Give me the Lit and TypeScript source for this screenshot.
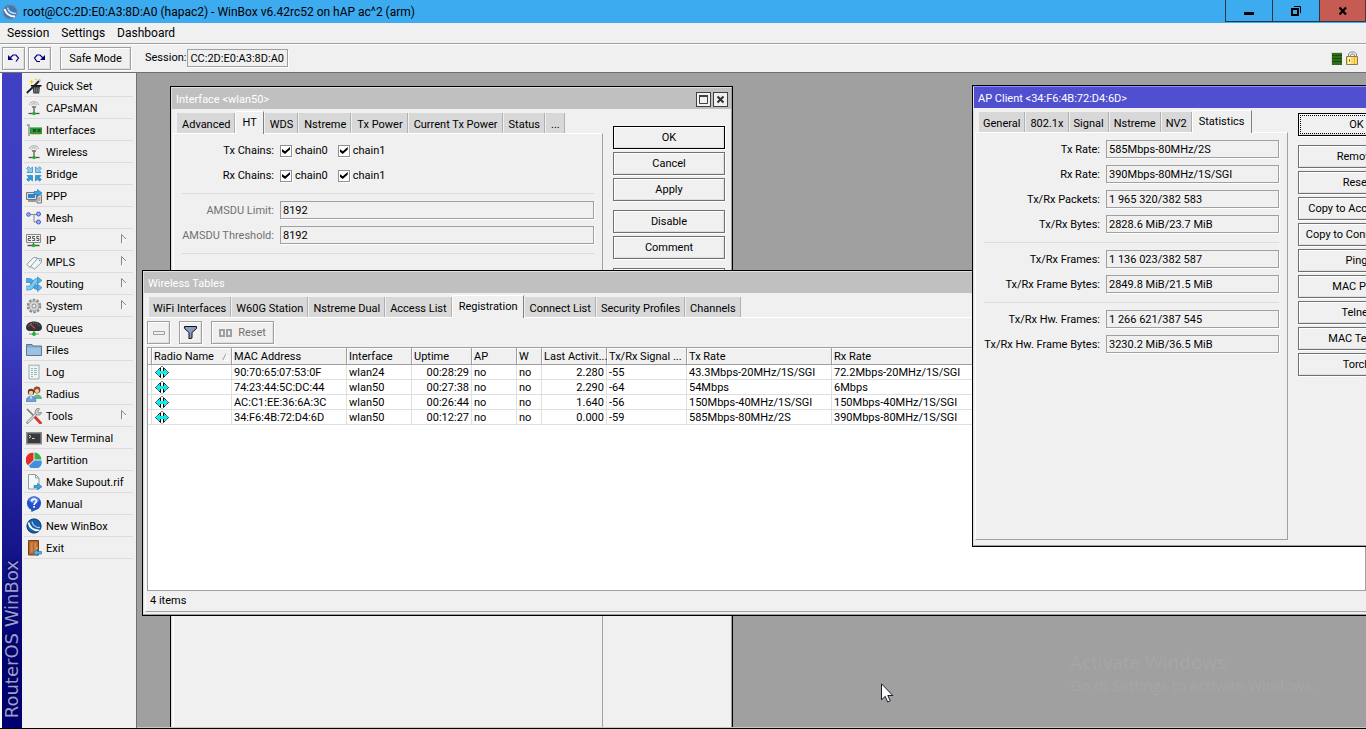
import { LitElement, html, svg, css, nothing } from "lit";
import { customElement, property } from "lit/decorators.js";
import { classMap } from "lit/directives/class-map.js";

const controls = css`
  * { box-sizing: border-box; }
  button, input, label, a { font: inherit; color: inherit; }
  button { cursor: default; white-space: nowrap; }
  .btn {
    height: 23px;
    padding: 0 8px;
    border: 1px solid #a0a0a0;
    background: #f0f0f0;
    box-shadow: inset 1px 1px #fff, inset -1px -1px #dfdfdf, 1px 1px #fff;
    display: flex;
    align-items: center;
    justify-content: center;
  }
  .btn.dark { border-color: #707070; }
  .btn.default { border-color: #000; }
  .btn.square { width: 23px; padding: 0; }
  .btn:disabled { color: #707070; }
  .field {
    height: 18px;
    min-width: 0;
    padding: 0 2px;
    border: 1px solid #a0a0a0;
    border-radius: 0;
    background: #f0f0f0;
    box-shadow: 1px 1px #fff;
    outline: none;
  }
`;

const icons: Record<string, unknown> = {
  quick: svg`<path d="M6.500 8h7.500l-.8 7.500H7.300z" fill="#3a3a3a"/><path d="M8.500 9.500v5M10.300 9.500v5M12.100 9.500v5" stroke="#909090" stroke-width=".8"/><path d="M5 7.800h10.500" stroke="#111" stroke-width="1.600"/><path d="M.8 15L7 9" stroke="#222" stroke-width="1.800"/><path d="M8 8l6-6" stroke="#222" stroke-width="1.800"/><path d="M12.800 3.200l1.700-1.700" stroke="#ccc" stroke-width="1.800"/><path d="M5.500 1l.7 2 2 .7-2 .7-.7 2-.7-2-2-.7 2-.7zM10 0l.4 1.100 1.100.4-1.100.4L10 3l-.4-1.100-1.100-.4 1.100-.4z" fill="#f2d01c"/>`,
  antenna: svg`<path d="M3.500 5c0-4.300 9-4.300 9 0M5.500 5.500c0-2.300 5-2.300 5 0" fill="none" stroke="#a4a4a4" stroke-width="1"/><path d="M6 7h4M8 6v7" stroke="#777" stroke-width="1.600"/><path d="M2.500 13.500h11" stroke="#555" stroke-width="1.300"/><circle cx="8" cy="13.500" r="1.700" fill="#19b52b"/>`,
  card: svg`<path d="M.8 3H3v11" fill="none" stroke="#999" stroke-width="1.600"/><path d="M4 5h12v7H4z" fill="#2f9a35"/><path d="M4 5h12v1H4z" fill="#70c875"/><path d="M7 7h3v3H7zM11.500 7h3v3h-3z" fill="#22502a"/><path d="M5.500 12.500h9" stroke="#d9bd3c" stroke-dasharray="1 .6"/>`,
  bridge: svg`<g fill="#8ed0f4" stroke="#2b7fb8" stroke-width=".7"><path d="M.7 2.500L2.500.7l2 2L6.500 1v5.500H1L2.700 4.500zM15.300 2.500L13.500.7l-2 2L9.500 1v5.500H15l-1.700-2z"/><path d="M.7 13.500l1.800 1.800 2-2L6.500 15V9.500H1l1.700 2zM15.300 13.500l-1.800 1.800-2-2L9.500 15V9.500H15l-1.700 2z" fill="#2f9be0"/></g>`,
  ppp: svg`<path d="M.5 4.500h10v7H.5z" fill="#ddd" stroke="#777"/><path d="M2 6h7v4H2z" fill="#2c83cf"/><path d="M2 12h8v2H2z" fill="#999"/><path d="M11 7h4.500v8H11z" fill="#e6e6e6" stroke="#777"/><path d="M12 10h2.500M12 12h2.500" stroke="#777"/><path d="M8 3.500h3.500v-2L16 5l-4.500 3.500v-2H8z" fill="#37a5e8" stroke="#1a6ba8" stroke-width=".6"/>`,
  mesh: svg`<path d="M4 4.500h6M8 4.500V12h3" fill="none" stroke="#888"/><g fill="#9cb0f5" stroke="#4059c8"><circle cx="2.500" cy="4.500" r="1.800"/><circle cx="12.500" cy="4" r="2"/><circle cx="12.500" cy="12" r="2"/></g>`,
  ip: svg`<path d="M.5 2.500h14v8H.5z" fill="#f2f2f2" stroke="#888"/><path d="M2 4.500h2.500v2H2.300v2H5M6.300 8.500h2.400v-2H6.600v-2H9M10.500 8.500h2.400v-2h-2.100v-2h2.400" fill="none" stroke="#444" stroke-width=".9"/><path d="M1.500 13.500h12M7.500 11v2" stroke="#555" stroke-width="1.300"/><circle cx="7.500" cy="13.500" r="1.800" fill="#19b52b"/>`,
  mpls: svg`<g fill="#f3f7f8" stroke="#7d9298" stroke-width=".9"><path d="M.8 10.500L7.500 3.500l3.500.2L11.200 7l-7 6.500z"/><path d="M4.500 12.500l7-8 4 .3-.3 3.900L8.500 15z"/></g><circle cx="13.500" cy="6.500" r=".8" fill="#7d9298"/>`,
  routing: svg`<path d="M0 4.500h3.500c3 0 4.500 7 7.500 7h2" fill="none" stroke="#2b7fb8" stroke-width="4.400"/><path d="M0 4.500h3.500c3 0 4.500 7 7.500 7h2" fill="none" stroke="#4aa8e6" stroke-width="3.400"/><path d="M0 12h3.500c3 0 4.500-7.500 7.500-7.500h2" fill="none" stroke="#2b7fb8" stroke-width="4.400"/><path d="M0 12h3.500c3 0 4.500-7.500 7.500-7.500h2" fill="none" stroke="#7cc8f4" stroke-width="3.400"/><path d="M11.500.8L16 4.500 11.500 8zM11.500 8L16 11.700 11.500 15.500z" fill="#56b1ea" stroke="#2b7fb8" stroke-width=".6"/>`,
  gear: svg`<circle cx="8" cy="8" r="6.300" fill="none" stroke="#8a8a8a" stroke-width="2" stroke-dasharray="2.500 1.450"/><circle cx="8" cy="8" r="5" fill="#d6d6d6" stroke="#8a8a8a" stroke-width=".8"/><circle cx="8" cy="8" r="2" fill="#f0f0f0" stroke="#8a8a8a"/>`,
  gauge: svg`<path d="M0 7.500C0 -.5 16 -.5 16 7.500c0 2-1 3-3 3.500H3C1 10.500 0 9.500 0 7.500z" fill="#303438"/><path d="M2.500 6.500c1-4.500 10-4.500 11 0" fill="none" stroke="#999" stroke-width=".8" stroke-dasharray="1 1"/><path d="M4 4l5 4.500" stroke="#e23a2c" stroke-width="1.400"/><path d="M3 14h10" stroke="#888"/><path d="M8 11v3" stroke="#555"/><circle cx="8" cy="14" r="1.900" fill="#19b52b"/>`,
  folder: svg`<path d="M.5 2.500h5.500l1 1.500h8.500v9.500H.5z" fill="#84a9cc" stroke="#4f789f"/><path d="M1 5.500h14v7.500H1z" fill="#9fc0de"/>`,
  log: svg`<path d="M3 .8l1 .8 1-.8 1 .8 1-.8 1 .8 1-.8 1 .8 1-.8 1 .8 1-.8V15H3z" fill="#edf5f5" stroke="#88a09f" stroke-width=".8"/><path d="M5 4.500h2M8 4.500h3M5 6.500h2M8 6.500h3M5 8.500h2M8 8.500h3M5 10.500h2M8 10.500h3M5 12.500h2" stroke="#8db3b1" stroke-width=".9"/>`,
  radius: svg`<circle cx="11" cy="4" r="3.400" fill="#9b4a28"/><circle cx="11" cy="5" r="2" fill="#f3c9a0"/><path d="M7 13c0-6 9-6 9 0z" fill="#63b889"/><circle cx="5" cy="6" r="3.200" fill="#5a3a20"/><circle cx="5" cy="7" r="2.200" fill="#f3c9a0"/><path d="M0 15.500c0-7 10-7 10 0z" fill="#6aa2e0" stroke="#3d6fb0" stroke-width=".6"/><path d="M4 10.500l1 3 1-3z" fill="#fff"/>`,
  tools: svg`<path d="M1 1l7.500 7.500" stroke="#777" stroke-width="1.600"/><path d="M8.500 8.500L14.500 15" stroke="#d9352b" stroke-width="2.800" stroke-linecap="round"/><path d="M1.500 14.500L11 5" stroke="#8a8a8a" stroke-width="2.600" stroke-linecap="round"/><path d="M1.500 14.500L11 5" stroke="#ddd" stroke-width="1.200"/><path d="M13.500.8a3.200 3.200 0 1 0 2 3.700L13 4.800 11.800 3.300z" fill="#ccc" stroke="#777" stroke-width=".8"/>`,
  terminal: svg`<path d="M0 2h16v12.500H0z" fill="#8c8c8c"/><path d="M1.500 3.500h13v9.500h-13z" fill="#3a3a3e"/><path d="M3 5l2 1.500L3 8M6 8.500h2.500" fill="none" stroke="#eee" stroke-width=".9"/>`,
  pie: svg`<path d="M7.500 8.200V.8A7.200 7.200 0 0 0 2 13.300z" fill="#e02f2a"/><path d="M8.500 7.500V.6A7 7 0 0 1 15.400 7.500z" fill="#35b046"/><path d="M8.500 8.500h7A7 7 0 0 1 2.800 13.800z" fill="#3d8fe0"/>`,
  supout: svg`<path d="M2.500.5h7l3.500 3.500v11h-10.500z" fill="#f4f8f8" stroke="#8aa1a1"/><path d="M9.500.5V4H13" fill="none" stroke="#8aa1a1"/><path d="M8 11.500h3.500v-2L16 12.700l-4.500 3v-2H8z" fill="#37a5e8" stroke="#1a6ba8" stroke-width=".6"/>`,
  manual: svg`<circle cx="8" cy="7.300" r="7" fill="#2450cc"/><path d="M5 13l.5 3 4-2z" fill="#2450cc"/><ellipse cx="8" cy="4" rx="5" ry="3" fill="#5f88ec"/><path d="M5.700 5.500c0-3 4.800-3 4.800-.3 0 1.800-2.400 1.700-2.400 3.700M8.100 10v1.800" fill="none" stroke="#fff" stroke-width="1.700"/>`,
  winbox: svg`<circle cx="8" cy="8" r="7.500" fill="#1b5fa6"/><circle cx="8" cy="8" r="7" fill="none" stroke="#0f4178" stroke-width=".8"/><path d="M2.500 4.500c1 5 5 8 11 8" fill="none" stroke="#fff" stroke-width="1.700"/><path d="M6 3.500c.6 3.600 3.500 6 8 6.200" fill="none" stroke="#a9d0f2" stroke-width="1.300"/>`,
  exit: svg`<path d="M2.500.5h10v14.500h-10z" fill="#b5672d" stroke="#7a3f14"/><path d="M4.500 2.500h2.200v10H4.500zM8.300 2.500h2.200v10H8.300z" fill="#cf8850"/><circle cx="11" cy="8" r=".8" fill="#f0d060"/><path d="M15.500 11.500h-4V9.800L7 12.800l4.500 3V14h4z" fill="#4db4ee" stroke="#1a6ba8" stroke-width=".6"/>`,
};

const drawIcon = (name: string) =>
  html`<svg class="icon" viewBox="0 0 16 16" width="16" height="16" aria-hidden="true">${icons[name]}</svg>`;

@customElement("wb-window")
export class WbWindow extends LitElement {
  @property() heading = "";
  @property({ type: Array }) tabs: string[] = [];
  @property() current = "";
  @property({ type: Boolean, reflect: true }) active = false;
  @property({ type: Boolean }) boxes = false;

  static styles = [
    controls,
    css`
      :host {
        display: flex;
        flex-direction: column;
        position: absolute;
        border: 1px solid #000;
        background: #f0f0f0;
        box-sizing: border-box;
      }
      .frame {
        flex: 1;
        display: flex;
        flex-direction: column;
        border: 1px solid;
        border-color: #dfdfdf #a0a0a0 #a0a0a0 #dfdfdf;
      }
      .title {
        height: 21px;
        display: flex;
        align-items: center;
        gap: 2px;
        padding: 2px 3px 0 4px;
        background: #c0c0c0;
        color: #fff;
      }
      :host([active]) .title { background: #4f4fcf; }
      :host([active]) .frame { border-top-color: #8c8cff; }
      .heading { flex: 1; padding-top: 1px; }
      .box {
        width: 15px;
        height: 15px;
        padding: 0;
        display: flex;
        align-items: center;
        justify-content: center;
        border: 1px solid #404040;
        background: #f0f0f0;
      }
      .body {
        flex: 1;
        display: flex;
        padding: 0 1px var(--foot, 2px) 1px;
      }
      .main {
        flex: 1;
        min-width: 0;
        display: flex;
        flex-direction: column;
      }
      .tabs {
        height: 24px;
        display: flex;
        align-items: flex-end;
        padding-left: 3px;
      }
      .tab {
        height: 20px;
        padding: 3px 4px 0 var(--tab-start, 4px);
        border: 0;
        border-right: 1px solid #b0b0b0;
        border-left: 1px solid #f0f0f0;
        background: #d8d8d8;
      }
      .tab.current {
        height: 23px;
        margin-bottom: -1px;
        padding: 0 6px 1px 6px;
        border-top: 1px solid #fff;
        border-left: 1px solid #fff;
        border-right: 1px solid #808080;
        background: #f0f0f0;
        position: relative;
      }
      .panel {
        flex: 1;
        display: flex;
        flex-direction: column;
        border: 1px solid;
        border-color: #fff #a0a0a0 #a0a0a0 #fff;
      }
    `,
  ];

  render() {
    return html`
      <div class="frame">
        <div class="title">
          <span class="heading">${this.heading}</span>
          ${this.boxes
            ? html`
                <button class="box" aria-label="Maximize">
                  <svg width="11" height="11"><path d="M1.500 1.500h8v8h-8z" fill="none" stroke="#404040"/><path d="M1 2h9" stroke="#404040" stroke-width="2"/></svg>
                </button>
                <button class="box" aria-label="Close">
                  <svg width="11" height="11"><path d="M2.500 2.500l6 6M8.500 2.500l-6 6" stroke="#303030" stroke-width="2"/></svg>
                </button>`
            : nothing}
        </div>
        <div class="body">
          <div class="main">
            <div class="tabs" role="tablist">
              ${this.tabs.map(
                (t) => html`<button role="tab" aria-selected=${t === this.current}
                  class=${classMap({ tab: true, current: t === this.current })}>${t}</button>`
              )}
            </div>
            <div class="panel" role="tabpanel"><slot></slot></div>
          </div>
          <slot name="actions"></slot>
        </div>
      </div>
    `;
  }
}

type Item = [icon: string, label: string, sub?: boolean];
const menu: Item[] = [
  ["quick", "Quick Set"], ["antenna", "CAPsMAN"], ["card", "Interfaces"], ["antenna", "Wireless"],
  ["bridge", "Bridge"], ["ppp", "PPP"], ["mesh", "Mesh"], ["ip", "IP", true], ["mpls", "MPLS", true],
  ["routing", "Routing", true], ["gear", "System", true], ["gauge", "Queues"], ["folder", "Files"],
  ["log", "Log"], ["radius", "Radius"], ["tools", "Tools", true], ["terminal", "New Terminal"],
  ["pie", "Partition"], ["supout", "Make Supout.rif"], ["manual", "Manual"], ["winbox", "New WinBox"],
  ["exit", "Exit"],
];

const columns: [label: string, width: number | null, right?: boolean][] = [
  ["", 4], ["Radio Name", 80], ["MAC Address", 115], ["Interface", 65], ["Uptime", 60, true], ["AP", 45],
  ["W", 25], ["Last Activit...", 65, true], ["Tx/Rx Signal ...", 80], ["Tx Rate", 145], ["Rx Rate", null],
];

const clients = [
  ["90:70:65:07:53:0F", "wlan24", "00:28:29", "no", "no", "2.280", "-55", "43.3Mbps-20MHz/1S/SGI", "72.2Mbps-20MHz/1S/SGI"],
  ["74:23:44:5C:DC:44", "wlan50", "00:27:38", "no", "no", "2.290", "-64", "54Mbps", "6Mbps"],
  ["AC:C1:EE:36:6A:3C", "wlan50", "00:26:44", "no", "no", "1.640", "-56", "150Mbps-40MHz/1S/SGI", "150Mbps-40MHz/1S/SGI"],
  ["34:F6:4B:72:D4:6D", "wlan50", "00:12:27", "no", "no", "0.000", "-59", "585Mbps-80MHz/2S", "390Mbps-80MHz/1S/SGI"],
];

const statistics: [string, string][][] = [
  [["Tx Rate", "585Mbps-80MHz/2S"], ["Rx Rate", "390Mbps-80MHz/1S/SGI"],
   ["Tx/Rx Packets", "1 965 320/382 583"], ["Tx/Rx Bytes", "2828.6 MiB/23.7 MiB"]],
  [["Tx/Rx Frames", "1 136 023/382 587"], ["Tx/Rx Frame Bytes", "2849.8 MiB/21.5 MiB"]],
  [["Tx/Rx Hw. Frames", "1 266 621/387 545"], ["Tx/Rx Hw. Frame Bytes", "3230.2 MiB/36.5 MiB"]],
];

@customElement("app-root")
export class AppRoot extends LitElement {
  static styles = [
    controls,
    css`
      :host {
        display: flex;
        flex-direction: column;
        height: 100vh;
        overflow: hidden;
        box-sizing: border-box;
        border-bottom: 1px solid #000;
        background: #f0f0f0;
        color: #000;
        font: 11px/14px Roboto, "Liberation Sans", sans-serif;
      }
      svg { display: block; flex: none; }

      .titlebar {
        height: 23px;
        flex: none;
        display: flex;
        align-items: center;
        gap: 5px;
        padding-left: 2px;
        background: #3dabf0;
        font: 12px/16px Roboto, "Open Sans", sans-serif;
      }
      .titlebar h1 { flex: 1; margin: 0; padding-top: 1px; font: inherit; }
      .caption { display: flex; align-self: flex-start; }
      .caption button {
        width: 47px;
        height: 22px;
        padding: 0;
        border: 1px solid #24384a;
        border-top: 0;
        border-right: 0;
        background: transparent;
        display: flex;
        align-items: center;
        justify-content: center;
      }
      .caption .close { background: #c55b52; border-right: 1px solid #5a3038; }

      .menubar {
        height: 21px;
        flex: none;
        display: flex;
        align-items: center;
        gap: 12px;
        padding: 0 7px;
        border-bottom: 1px solid #a0a0a0;
        font: 12px/16px Roboto, "Open Sans", sans-serif;
      }
      .menubar button { padding: 0; border: 0; background: none; }

      .toolbar {
        height: 29px;
        flex: none;
        display: flex;
        align-items: center;
        gap: 3px;
        padding: 0 7px 1px 2px;
        border-top: 1px solid #fff;
        border-bottom: 1px solid #707070;
      }
      .toolbar .safe { width: 71px; margin: 0 11px 0 6px; padding-top: 1px; }
      .toolbar .session { width: 101px; margin-left: -2px; }
      .toolbar .led { margin-left: auto; }
      .toolbar .lock { margin-left: 1px; }

      .workspace { flex: 1; min-height: 0; display: flex; }
      .brand {
        width: 22px;
        border-left: 2px solid #fff;
        background: linear-gradient(#4040c4, #3c3cc0 40%, #000070 90%);
        writing-mode: vertical-rl;
        display: flex;
        align-items: center;
        justify-content: flex-end;
      }
      .brand span {
        transform: rotate(180deg);
        padding-top: 10px;
        font: 18px/20px "DejaVu Sans", sans-serif;
        color: #9c9cd0;
        text-shadow: 1px -1px 2px #00003c;
      }
      .menu {
        width: 115px;
        flex: none;
        padding: 2px 3px 0 2px;
        border-right: 1px solid #707070;
      }
      .menu a {
        height: 22px;
        display: flex;
        align-items: center;
        gap: 4px;
        padding: 0 5px 0 2px;
        border-bottom: 1px solid #dcdcdc;
        text-decoration: none;
      }
      .menu a span { flex: 1; padding-top: 2px; white-space: nowrap; }

      .desktop {
        flex: 1;
        min-width: 0;
        position: relative;
        overflow: hidden;
        background: #a0a0a0;
        border-bottom: 1px solid #c8c8c8;
      }
      .interface { left: 33px; top: 13px; width: 563px; height: 700px; --foot: 5px; --tab-start: 5px; }
      .wireless { left: 5px; top: 197px; right: -5px; height: 346px; }
      .client { left: 835px; top: 12px; width: 452px; height: 462px; --foot: 5px; }

      .form { display: flex; flex-direction: column; gap: 7px; padding: 7px 8px; }
      .row { display: grid; align-items: center; height: 18px; gap: 6px; }
      .row > .name { padding-top: 2px; text-align: right; white-space: nowrap; }
      .form.narrow .row { grid-template-columns: 92px 1fr; }
      .form.wide .row { grid-template-columns: 116px 1fr; }
      .row.off .name { color: #707070; }
      .rule { height: 1px; margin: 2px 0 0; border: 0; background: #dcdcdc; }
      .choices { display: flex; gap: 10px; }
      .choices label { display: flex; align-items: center; gap: 3px; padding-top: 1px; }
      .choices input {
        appearance: none;
        width: 12px;
        height: 12px;
        margin: 0;
        border: 1px solid #909090;
        background: #fff;
        box-shadow: 1px 1px #fff;
        display: grid;
        place-items: center;
      }
      .choices input:checked::before {
        content: "";
        width: 8px;
        height: 7px;
        background: #000;
        clip-path: polygon(0 30%, 38% 62%, 100% 0, 100% 36%, 38% 100%, 0 68%);
      }

      .actions { display: flex; flex-direction: column; gap: 3px; }
      .interface .actions { width: 127px; padding: 17px 5px 0 10px; }
      .client .actions { width: 133px; padding: 5px 6px 0 10px; }
      .actions .btn { flex: none; padding-top: 1px; }
      .actions .group { margin-top: 6px; }
      .focus { outline: 1px dotted #000; outline-offset: -3px; }

      .tools { display: flex; gap: 9px; padding: 3px 1px; }
      .tools .reset { width: 63px; gap: 6px; padding: 1px 2px 0; }
      .grid {
        flex: 1;
        margin: 0 1px;
        border: 1px solid #a0a0a0;
        background: #fff;
      }
      table { width: 100%; border-collapse: separate; border-spacing: 0; table-layout: fixed; }
      th, td {
        height: 15px;
        padding: 1px 2px 0 2px;
        border-right: 1px solid #dfdfdf;
        border-bottom: 1px solid #dfdfdf;
        font-weight: 400;
        line-height: 13px;
        text-align: left;
        white-space: nowrap;
      }
      th {
        height: 17px;
        padding-right: 0;
        background: #f0f0f0;
        border-color: #a0a0a0;
        box-shadow: inset 1px 1px #fff;
      }
      th:first-child, td:first-child { padding: 0; }
      th:last-child, td:last-child { border-right: 0; }
      td.right { text-align: right; }
      .sort { display: flex; align-items: center; justify-content: space-between; padding-right: 2px; }
      .peer { margin-left: 1px; }
      .status { height: 20px; padding: 3px 4px; }

      .watermark {
        position: absolute;
        right: 50px;
        bottom: 31px;
        color: #a6a6a6;
        font: 15px/22px "Open Sans", sans-serif;
        white-space: nowrap;
      }
      .watermark strong { display: block; font-weight: 400; font-size: 19px; line-height: 24px; }
      .cursor { position: absolute; left: 744px; top: 610px; }
    `,
  ];

  private field(id: string, label: string, value: string, off = false) {
    return html`<div class=${classMap({ row: true, off })}>
      <label class="name" for=${id}>${label}:</label>
      <input class="field" id=${id} .value=${value} readonly />
    </div>`;
  }

  private chains(label: string) {
    return html`<div class="row" role="group" aria-label=${label}>
      <span class="name">${label}:</span>
      <div class="choices">
        <label><input type="checkbox" checked />chain0</label>
        <label><input type="checkbox" checked />chain1</label>
      </div>
    </div>`;
  }

  private actions(groups: string[][], focused = false) {
    return html`<div class="actions" slot="actions">
      ${groups.map((g, gi) => g.map((name, i) => html`<button class=${classMap({
        btn: true, dark: true, default: name === "OK", focus: focused && name === "OK", group: gi > 0 && i === 0,
      })}>${name}</button>`))}
    </div>`;
  }

  render() {
    return html`
      <header class="titlebar">
        <svg width="16" height="16" viewBox="0 0 16 16"><circle cx="8" cy="8" r="7.800" fill="#3f78b4"/><circle cx="8" cy="8" r="7.300" fill="none" stroke="#8a9bab" stroke-width=".9"/><path d="M2.500 5c1.500 4.500 5 7.500 10.500 7.500" fill="none" stroke="#fff" stroke-width="2"/><path d="M5.500 3.500c1 4 4 6 8.500 6" fill="none" stroke="#b6d6f2" stroke-width="1.500"/></svg>
        <h1>root@CC:2D:E0:A3:8D:A0 (hapac2) - WinBox v6.42rc52 on hAP ac^2 (arm)</h1>
        <div class="caption">
          <button aria-label="Minimize"><svg width="10" height="10"><path d="M0 6h10v3H0z"/></svg></button>
          <button aria-label="Restore"><svg width="10" height="10"><path d="M1 3h6v6H1z" fill="none" stroke="#000" stroke-width="2"/><path d="M3 .5h6.500V7" fill="none" stroke="#000"/></svg></button>
          <button class="close" aria-label="Close"><svg width="10" height="8"><path d="M1.500 .5l6.500 7M8 .5l-6.500 7" stroke="#000" stroke-width="2.200"/></svg></button>
        </div>
      </header>
      <nav class="menubar"><button>Session</button><button>Settings</button><button>Dashboard</button></nav>
      <div class="toolbar">
        <button class="btn square" aria-label="Undo"><svg width="13" height="11"><path d="M1 2v5h5z" fill="#000080"/><path d="M3 5l3-3h3l2.500 3-2.500 3.500" fill="none" stroke="#000080" stroke-width="1.200"/></svg></button>
        <button class="btn square" aria-label="Redo"><svg width="13" height="11"><path d="M12 2v5H7z" fill="#000080"/><path d="M10 5L7 2H4L1.500 5 4 8.500h3" fill="none" stroke="#000080" stroke-width="1.200"/></svg></button>
        <button class="btn safe">Safe Mode</button>
        <label for="session">Session:</label>
        <input class="field session" id="session" .value=${"CC:2D:E0:A3:8D:A0"} readonly />
        <svg class="led" width="11" height="13"><path d="M0 0h11v13H0z" fill="#d8d8d8"/><path d="M1 1h10v12H1z" fill="#2c6e18"/><path d="M1 3.500h10M1 6.500h10M1 9.500h10" stroke="#1d4c10"/></svg>
        <svg class="lock" width="13" height="14"><path d="M2.500 6V3l2-2h4l2 2v3M4.500 6V4l1-1h2l1 1v2" fill="none" stroke="#888"/><path d="M.5 5.500h11v8H.5z" fill="#fbd966" stroke="#8a7a50"/><path d="M2 6h3v7H2z" fill="#fff2a0"/><path d="M8 6h1v7H8z" fill="#f0b53c"/><path d="M3 8.500h1v2H3z" fill="#444"/></svg>
      </div>
      <div class="workspace">
        <div class="brand"><span>RouterOS WinBox</span></div>
        <nav class="menu">
          ${menu.map(([icon, label, sub]) => html`<a href="#">${drawIcon(icon)}<span>${label}</span>${sub
            ? html`<svg width="7" height="12"><path d="M.5 9.500V.5l4.500 4.500" fill="none" stroke="#888"/><path d="M.5 9.500L5.500 4.500" fill="none" stroke="#fff"/></svg>`
            : nothing}</a>`)}
        </nav>
        <main class="desktop">
          <wb-window class="interface" heading="Interface <wlan50>" boxes current="HT"
            .tabs=${["Advanced", "HT", "WDS", "Nstreme", "Tx Power", "Current Tx Power", "Status", "..."]}>
            <div class="form narrow">
              ${this.chains("Tx Chains")}${this.chains("Rx Chains")}
              <hr class="rule" />
              ${this.field("amsdu-limit", "AMSDU Limit", "8192", true)}
              ${this.field("amsdu-threshold", "AMSDU Threshold", "8192", true)}
              <hr class="rule" />
            </div>
            ${this.actions([["OK", "Cancel", "Apply"], ["Disable", "Comment"], ["Torch"]])}
          </wb-window>

          <div class="watermark"><strong>Activate Windows</strong>Go to Settings to activate Windows.</div>

          <wb-window class="wireless" heading="Wireless Tables" current="Registration"
            .tabs=${["WiFi Interfaces", "W60G Station", "Nstreme Dual", "Access List", "Registration", "Connect List", "Security Profiles", "Channels"]}>
            <div class="tools">
              <button class="btn square" disabled aria-label="Remove"><svg width="12" height="4"><path d="M.5.5h11v3H.5z" fill="none" stroke="#a0a0a0"/></svg></button>
              <button class="btn square" aria-label="Filter"><svg width="13" height="13"><path d="M.5.500h12v2l-4.500 4v5.500l-3 1V6.500l-4.500-4z" fill="#8a9bc8" stroke="#111"/></svg></button>
              <button class="btn reset" disabled><svg width="13" height="8"><path d="M1 1h4v6H1zM8 1h4v6H8z" fill="none" stroke="#a0a0a0" stroke-width="2"/></svg>Reset</button>
            </div>
            <div class="grid">
              <table>
                <colgroup>${columns.map(([, w]) => (w ? html`<col style="width:${w}px" />` : html`<col />`))}</colgroup>
                <thead><tr>${columns.map(([label], i) => html`<th>${i === 1
                  ? html`<div class="sort">${label}<svg width="7" height="8"><path d="M.5 7.500L4 .5" stroke="#a0a0a0"/><path d="M4 .5l2.500 7h-6" fill="none" stroke="#fff"/></svg></div>`
                  : label}</th>`)}</tr></thead>
                <tbody>
                  ${clients.map((row) => html`<tr><td></td><td><svg class="peer" width="14" height="13"><path d="M7 1v11h-.5L1 6.500 6.500 1zM7 1h.5L13 6.500 7.500 12H7z" fill="#00f0f0"/><path d="M6.500 .5l-6 6 6 6M7.500 .5l6 6-6 6" fill="none" stroke="#000" stroke-dasharray="1.400 .5"/><path d="M5.500 2v3M8.500 2v3M5.500 8v3M8.500 8v3" stroke="#000"/><path d="M7 1v4M7 8v4" stroke="#fff" stroke-width="2"/></svg></td>${row.map(
                    (v, i) => html`<td class=${classMap({ right: !!columns[i + 2][2] })}>${v}</td>`)}</tr>`)}
                </tbody>
              </table>
            </div>
            <div class="status">4 items</div>
          </wb-window>

          <wb-window class="client" heading="AP Client <34:F6:4B:72:D4:6D>" active current="Statistics"
            .tabs=${["General", "802.1x", "Signal", "Nstreme", "NV2", "Statistics"]}>
            <div class="form wide">
              ${statistics.map((group, g) => html`
                ${g ? html`<hr class="rule" />` : nothing}
                ${group.map(([label, value], i) => this.field(`stat-${g}-${i}`, label, value))}`)}
            </div>
            ${this.actions([["OK"], ["Remove", "Reset", "Copy to Access List", "Copy to Connect List", "Ping", "MAC Ping", "Telnet", "MAC Telnet", "Torch"]], true)}
          </wb-window>

          <svg class="cursor" width="13" height="20"><path d="M.5.800v16l3.700-3.500 2.500 5.700 2.600-1.200-2.500-5.300h5z" fill="#fff" stroke="#1c1c28"/></svg>
        </main>
      </div>
    `;
  }
}
